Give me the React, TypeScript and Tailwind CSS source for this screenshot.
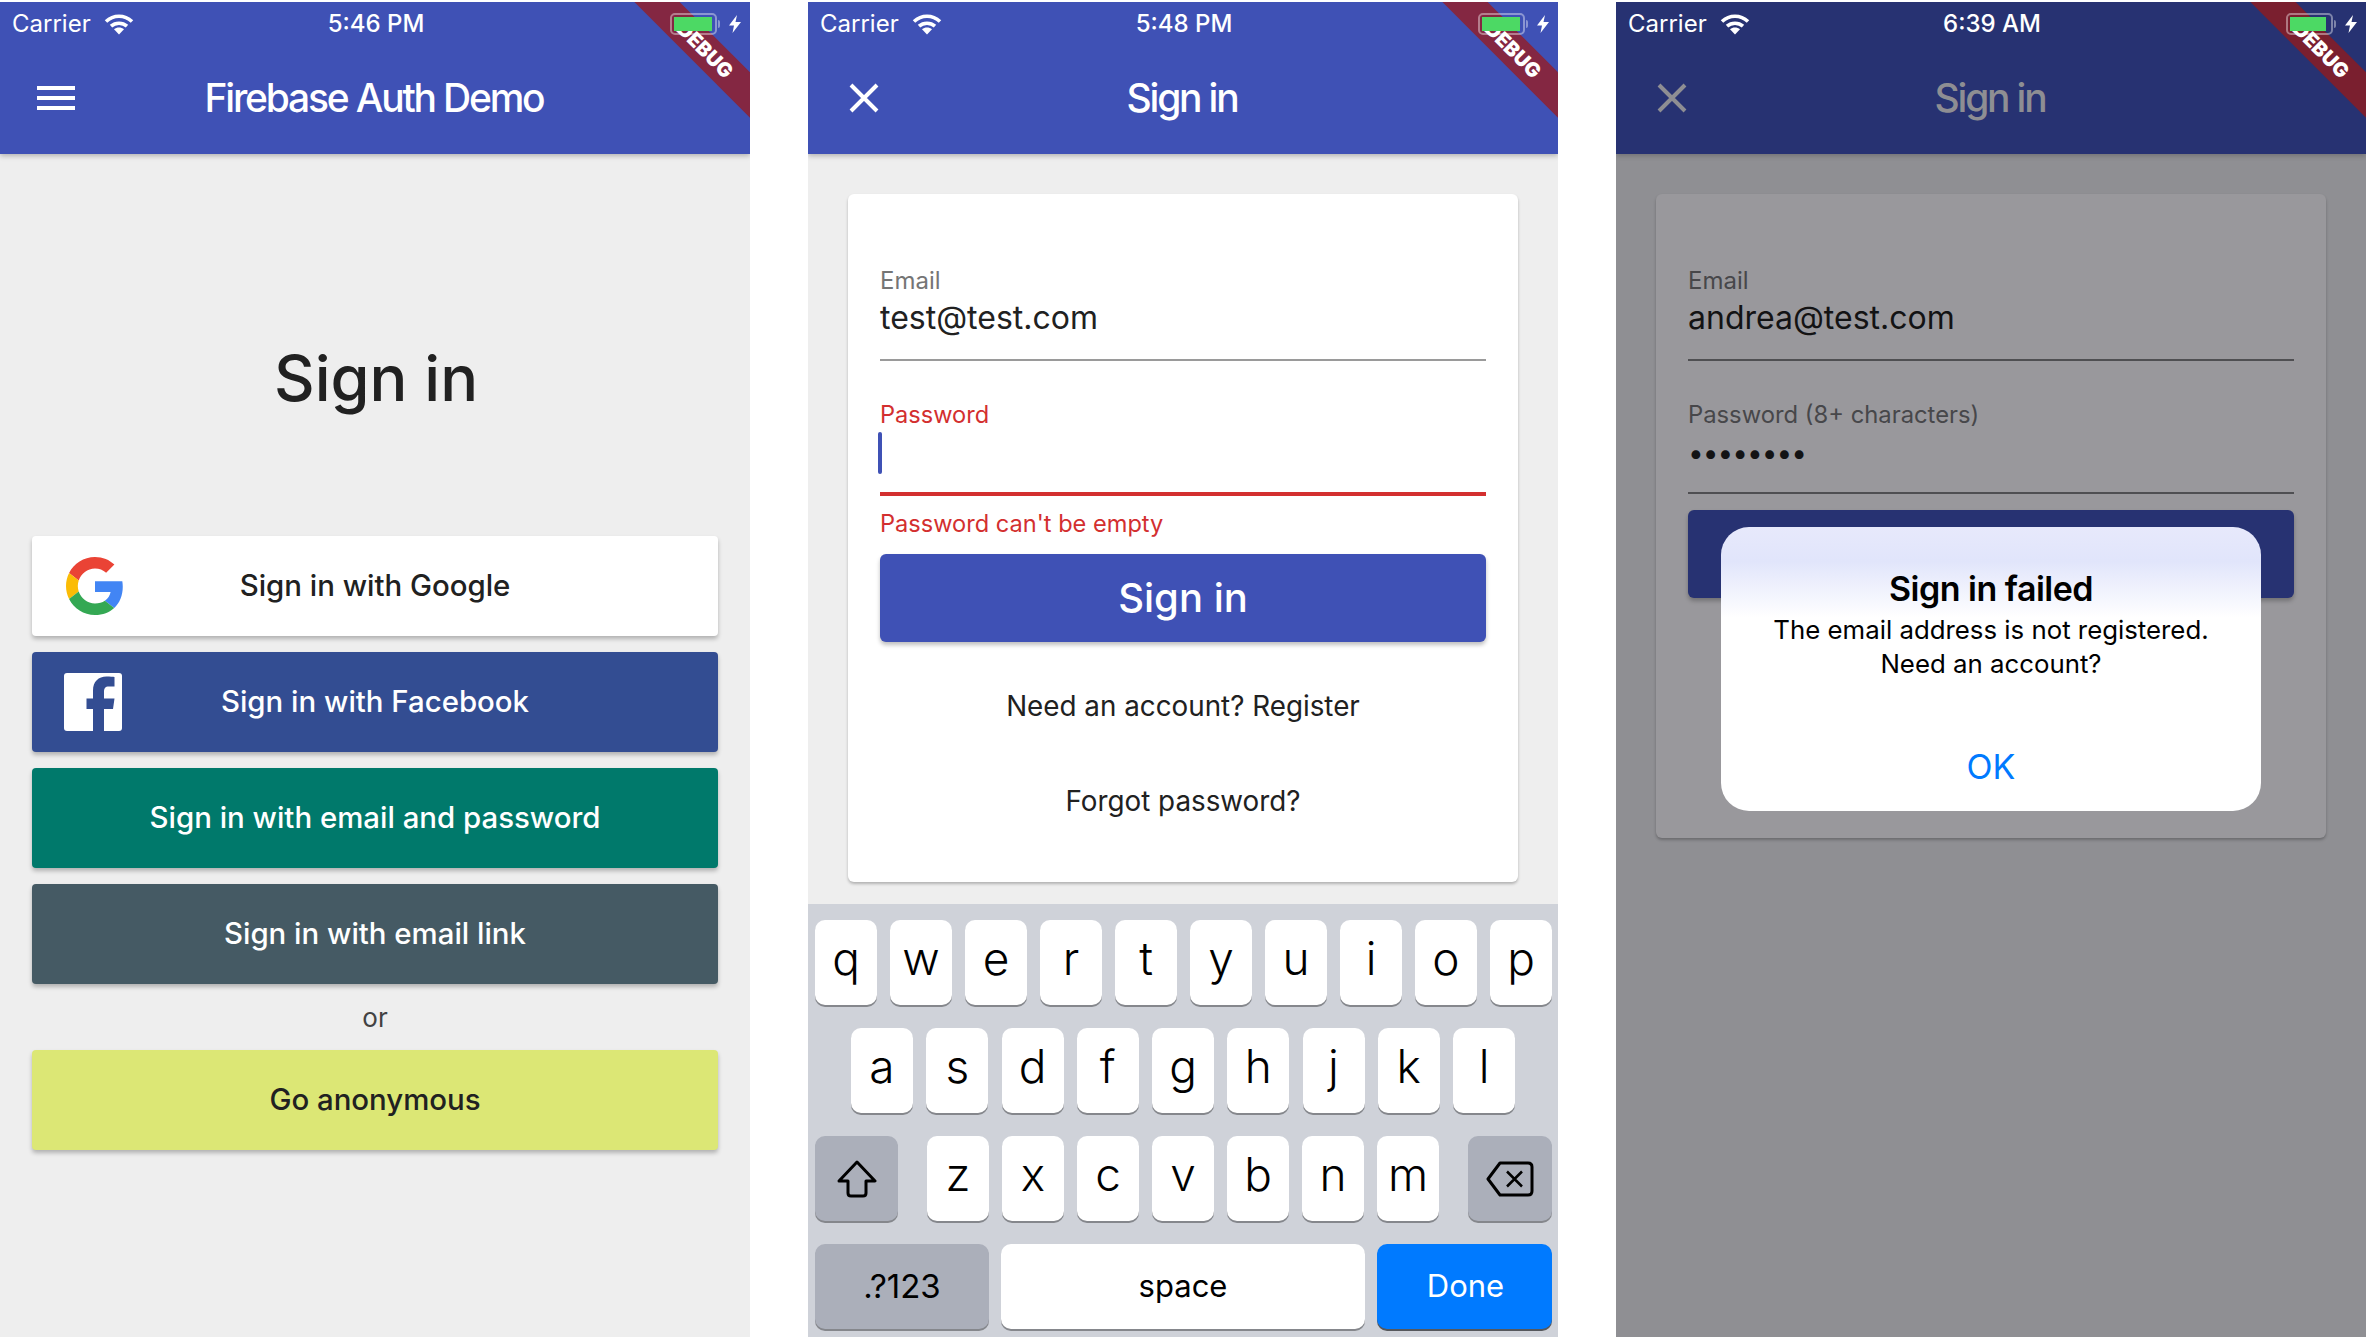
import React from "react";

function Wifi() {
  return (
    <svg width="30" height="22" viewBox="0 0 30 22" className="block">
      <path d="M2 8.5C9.5 1.5 20.500 1.500 28 8.500" fill="none" stroke="white" strokeWidth="3.600" />
      <path d="M7 13.200C11.500 9.200 18.500 9.200 23 13.200" fill="none" stroke="white" strokeWidth="3.600" />
      <path d="M10 16.300C12.800 14 17.200 14 20 16.300L15 21.500Z" fill="white" />
    </svg>
  );
}

function Battery({ fill }: { fill: number }) {
  return (
    <div className="flex items-center pr-[9px]">
      <div className="h-[22px] w-[47px] rounded-[5px] border-2 border-white/40 p-[2px]">
        <div className="h-full bg-[#4cd964]" style={{ width: fill }} />
      </div>
      <div className="ml-[1px] mr-[9px] h-[8px] w-[2px] rounded-r bg-white/40" />
      <svg width="12" height="18" viewBox="0 0 12 18">
        <path d="M8 0L0 10.500H5L3.500 18L12 7H6.500Z" fill="white" />
      </svg>
    </div>
  );
}

function Ribbon({ dim }: { dim?: boolean }) {
  return (
    <div
      className={
        dim
          ? "absolute left-[605px] top-[32px] z-10 flex h-[32px] w-[200px] rotate-45 items-center justify-center bg-[#7a1f2f] text-[20px] font-black text-white"
          : "absolute left-[605px] top-[32px] z-10 flex h-[32px] w-[200px] rotate-45 items-center justify-center bg-[#842742] text-[20px] font-black text-white"
      }
    >
      DEBUG
    </div>
  );
}

function AppBar({
  time,
  title,
  icon,
  dim,
  fill,
}: {
  time: string;
  title: string;
  icon: "menu" | "close";
  dim?: boolean;
  fill: number;
}) {
  const fg = dim ? "#8e8e93" : "#ffffff";
  return (
    <div
      className={
        dim
          ? "relative h-[152px] bg-[#273272] shadow-[0_2px_5px_rgba(0,0,0,0.2)]"
          : "relative h-[152px] bg-[#3f51b5] shadow-[0_2px_5px_rgba(0,0,0,0.25)]"
      }
    >
      <Ribbon dim={dim} />
      <div className="relative z-20 grid h-[44px] grid-cols-3 items-center text-[24px] text-white">
        <div className="flex items-center gap-[13px] pl-3">
          <span>Carrier</span>
          <Wifi />
        </div>
        <div className="pl-[2px] text-center font-medium">{time}</div>
        <div className="flex justify-end">
          <Battery fill={fill} />
        </div>
      </div>
      <div className="grid h-[104px] grid-cols-[114px_1fr_114px] items-center">
        <div className={icon === "menu" ? "pl-[37px]" : "pl-[40px]"}>
          {icon === "menu" ? (
            <svg width="38" height="26" viewBox="0 0 38 26" className="block">
              <path d="M0 3H38M0 13H38M0 23H38" stroke={fg} strokeWidth="4" />
            </svg>
          ) : (
            <svg width="32" height="32" viewBox="0 0 32 32" className="block">
              <path d="M3 3L29 29M29 3L3 29" stroke={fg} strokeWidth="4" />
            </svg>
          )}
        </div>
        <div
          className="pr-[2px] text-center text-[39px] font-medium tracking-[-2.200px] whitespace-nowrap"
          style={{ color: fg }}
        >
          {title}
        </div>
        <div />
      </div>
    </div>
  );
}

function Phone({
  children,
  bg,
}: {
  children: React.ReactNode;
  bg: string;
}) {
  return (
    <div
      className="relative flex h-[1335px] w-[750px] shrink-0 flex-col overflow-hidden"
      style={{ backgroundColor: bg }}
    >
      {children}
    </div>
  );
}

function GoogleG() {
  return (
    <svg width="58" height="58" viewBox="0 0 48 48" className="block">
      <path fill="#EA4335" d="M24 9.500c3.540 0 6.710 1.220 9.210 3.600l6.850-6.850C35.900 2.380 30.470 0 24 0 14.620 0 6.510 5.380 2.560 13.220l7.980 6.190C12.430 13.720 17.740 9.500 24 9.500z" />
      <path fill="#4285F4" d="M46.980 24.550c0-1.570-.15-3.090-.38-4.550H24v9.020h12.940c-.58 2.960-2.260 5.480-4.780 7.180l7.730 6c4.510-4.180 7.090-10.360 7.090-17.650z" />
      <path fill="#FBBC05" d="M10.530 28.590c-.48-1.450-.76-2.990-.76-4.590s.27-3.140.76-4.590l-7.980-6.190C.92 16.460 0 20.120 0 24c0 3.880.92 7.540 2.560 10.780l7.970-6.190z" />
      <path fill="#34A853" d="M24 48c6.480 0 11.930-2.130 15.890-5.810l-7.730-6c-2.150 1.450-4.920 2.300-8.160 2.300-6.260 0-11.570-4.220-13.470-9.910l-7.980 6.190C6.510 42.620 14.620 48 24 48z" />
    </svg>
  );
}

function FacebookF() {
  return (
    <svg width="58" height="58" viewBox="0 0 58 58" className="block">
      <rect width="58" height="58" rx="3" fill="white" />
      <path
        d="M40 58V36H49L50.500 25.500H40V19C40 15.500 41 13.500 45 13.500H50.500V4C49 3.800 46 3.500 42.500 3.500C34.500 3.500 29 8.500 29 17.500V25.500H22.500V36H29V58Z"
        fill="#334d92"
      />
    </svg>
  );
}

function AuthButton({
  label,
  bg,
  fg,
  icon,
  iconLeft,
}: {
  label: string;
  bg: string;
  fg: string;
  icon?: React.ReactNode;
  iconLeft?: boolean;
}) {
  return (
    <div
      className="relative flex h-[100px] items-center justify-center rounded-[4px] text-[29.400px] font-medium shadow-[0_3px_4px_rgba(0,0,0,0.25)]"
      style={{ backgroundColor: bg, color: fg }}
    >
      {icon ? (
        <div className={iconLeft ? "absolute left-[34px] top-[21px]" : "absolute left-[32px] top-[21px]"}>{icon}</div>
      ) : null}
      {label}
    </div>
  );
}

function SignInScreen() {
  return (
    <Phone bg="#eeeeee">
      <AppBar time="5:46 PM" title="Firebase Auth Demo" icon="menu" fill={38} />
      <div className="flex flex-col px-8 pt-[184px]">
        <div className="pl-[2px] text-center text-[63px] leading-[80px] font-medium text-[#212121]">Sign in</div>
        <div className="mt-[118px] flex flex-col gap-4">
          <AuthButton label="Sign in with Google" bg="#ffffff" fg="#212121" icon={<GoogleG />} iconLeft />
          <AuthButton label="Sign in with Facebook" bg="#334d92" fg="#ffffff" icon={<FacebookF />} />
          <AuthButton label="Sign in with email and password" bg="#00796b" fg="#ffffff" />
          <AuthButton label="Sign in with email link" bg="#455a64" fg="#ffffff" />
        </div>
        <div className="flex h-[66px] items-center justify-center text-[26px] text-[#424242]">or</div>
        <AuthButton label="Go anonymous" bg="#dce775" fg="#212121" />
      </div>
    </Phone>
  );
}

function Key({ k }: { k: string }) {
  return (
    <div className="flex h-[85px] w-[62px] items-center justify-center rounded-[10px] bg-white pb-[8px] text-[46px] font-light text-black shadow-[0_2px_0_#85878c]">
      {k}
    </div>
  );
}

function Keyboard() {
  return (
    <div className="mt-[22px] flex flex-1 flex-col gap-[23px] bg-[#cfd2d9] pt-4 pr-[6px] pl-[7px]">
      <div className="flex justify-between">
        {"qwertyuiop".split("").map((k) => (
          <Key key={k} k={k} />
        ))}
      </div>
      <div className="flex justify-between pr-[37px] pl-[36px]">
        {"asdfghjkl".split("").map((k) => (
          <Key key={k} k={k} />
        ))}
      </div>
      <div className="flex justify-between">
        <div className="flex h-[85px] w-[83px] items-center justify-center rounded-[10px] bg-[#abafba] shadow-[0_2px_0_#85878c]">
          <svg width="40" height="38" viewBox="0 0 40 38">
            <path
              d="M20 2L38 21H29V33C29 35 28 36 26 36H14C12 36 11 35 11 33V21H2Z"
              fill="none"
              stroke="#000"
              strokeWidth="3"
              strokeLinejoin="round"
            />
          </svg>
        </div>
        <div className="flex gap-[13px]">
          {"zxcvbnm".split("").map((k) => (
            <Key key={k} k={k} />
          ))}
        </div>
        <div className="flex h-[85px] w-[84px] items-center justify-center rounded-[10px] bg-[#abafba] shadow-[0_2px_0_#85878c]">
          <svg width="48" height="36" viewBox="0 0 48 36">
            <path
              d="M14 2H42C44.500 2 46 3.500 46 6V30C46 32.500 44.500 34 42 34H14L2 18Z"
              fill="none"
              stroke="#000"
              strokeWidth="3"
              strokeLinejoin="round"
            />
            <path d="M21 10.500L36 25.500M36 10.500L21 25.500" stroke="#000" strokeWidth="2.500" />
          </svg>
        </div>
      </div>
      <div className="flex gap-3">
        <div className="flex h-[85px] w-[174px] items-center justify-center rounded-[10px] bg-[#abafba] text-[33px] text-black shadow-[0_2px_0_#85878c]">
          .?123
        </div>
        <div className="flex h-[85px] flex-1 items-center justify-center rounded-[10px] bg-white text-[31px] text-black shadow-[0_2px_0_#85878c]">
          space
        </div>
        <div className="flex h-[85px] w-[175px] items-center justify-center rounded-[10px] bg-[#007aff] pl-[2px] text-[31px] text-white shadow-[0_2px_0_#56585c]">
          Done
        </div>
      </div>
    </div>
  );
}

function FormScreen() {
  return (
    <Phone bg="#eeeeee">
      <AppBar time="5:48 PM" title="Sign in" icon="close" fill={38} />
      <div className="mx-10 mt-10 rounded-[6px] bg-white px-8 pt-[73px] pb-[61px] shadow-[0_2px_3px_rgba(0,0,0,0.25)]">
        <div className="text-[24px] leading-[28px] text-[#757575]">Email</div>
        <div className="mt-[3px] text-[32px] leading-[40px] text-[#212121]">test@test.com</div>
        <div className="mt-[21px] h-[2px] bg-[#9a9a9a]" />
        <div className="mt-[40px] text-[23.600px] leading-[28px] text-[#d32f2f]">Password</div>
        <div className="mt-[3px] ml-[-2px] h-[42px] w-[4px] rounded-[2px] bg-[#3f51b5]" />
        <div className="mt-[18px] h-[4px] bg-[#d32f2f]" />
        <div className="mt-[14px] text-[23.600px] leading-[28px] text-[#d32f2f]">Password can't be empty</div>
        <div className="mt-4 flex h-[88px] items-center justify-center rounded-[6px] bg-[#3f51b5] text-[40px] font-medium text-white shadow-[0_3px_4px_rgba(0,0,0,0.25)]">
          Sign in
        </div>
        <div className="mt-[44px] text-center text-[27.800px] leading-[40px] text-[#212121]">Need an account? Register</div>
        <div className="mt-[55px] text-center text-[27.800px] leading-[40px] text-[#212121]">Forgot password?</div>
      </div>
      <Keyboard />
    </Phone>
  );
}

function FailedScreen() {
  return (
    <Phone bg="#8f8f93">
      <AppBar time="6:39 AM" title="Sign in" icon="close" dim fill={36} />
      <div className="mx-10 mt-10 rounded-[6px] bg-[#99989c] px-8 pt-[73px] pb-[240px] shadow-[0_2px_3px_rgba(0,0,0,0.25)]">
        <div className="text-[24px] leading-[28px] text-[#47474a]">Email</div>
        <div className="mt-[3px] text-[32px] leading-[40px] text-[#131314]">andrea@test.com</div>
        <div className="mt-[21px] h-[2px] bg-[#4f4f52]" />
        <div className="mt-[40px] text-[23.800px] leading-[28px] text-[#47474a]">Password (8+ characters)</div>
        <div className="mt-[4px] h-[40px] text-[28px] leading-[40px] tracking-[-1px] text-[#131314]">••••••••</div>
        <div className="mt-[19px] h-[2px] bg-[#4f4f52]" />
        <div className="mt-4 h-[88px] rounded-[6px] bg-[#273272] shadow-[0_3px_4px_rgba(0,0,0,0.25)]" />
      </div>
      <div className="absolute left-[105px] top-[525px] z-10 h-[284px] w-[540px] rounded-[28px] bg-[linear-gradient(to_bottom,#e7e9fb_0%,#e1e5fb_12%,#ffffff_32%)] pt-[42px] text-center text-black">
        <div className="text-[34px] leading-[40px] font-semibold tracking-[-0.500px]">Sign in failed</div>
        <div className="mt-1 text-[25.800px] leading-[34px]">The email address is not registered.</div>
        <div className="text-[25.800px] leading-[34px]">Need an account?</div>
        <div className="mt-[64px] text-[34px] leading-[44px] text-[#007aff]">OK</div>
      </div>
    </Phone>
  );
}

export default function App() {
  return (
    <div className="flex min-h-[1342px] w-[2370px] gap-[58px] bg-white pt-[2px] font-[Inter,sans-serif]">
      <SignInScreen />
      <FormScreen />
      <FailedScreen />
    </div>
  );
}
